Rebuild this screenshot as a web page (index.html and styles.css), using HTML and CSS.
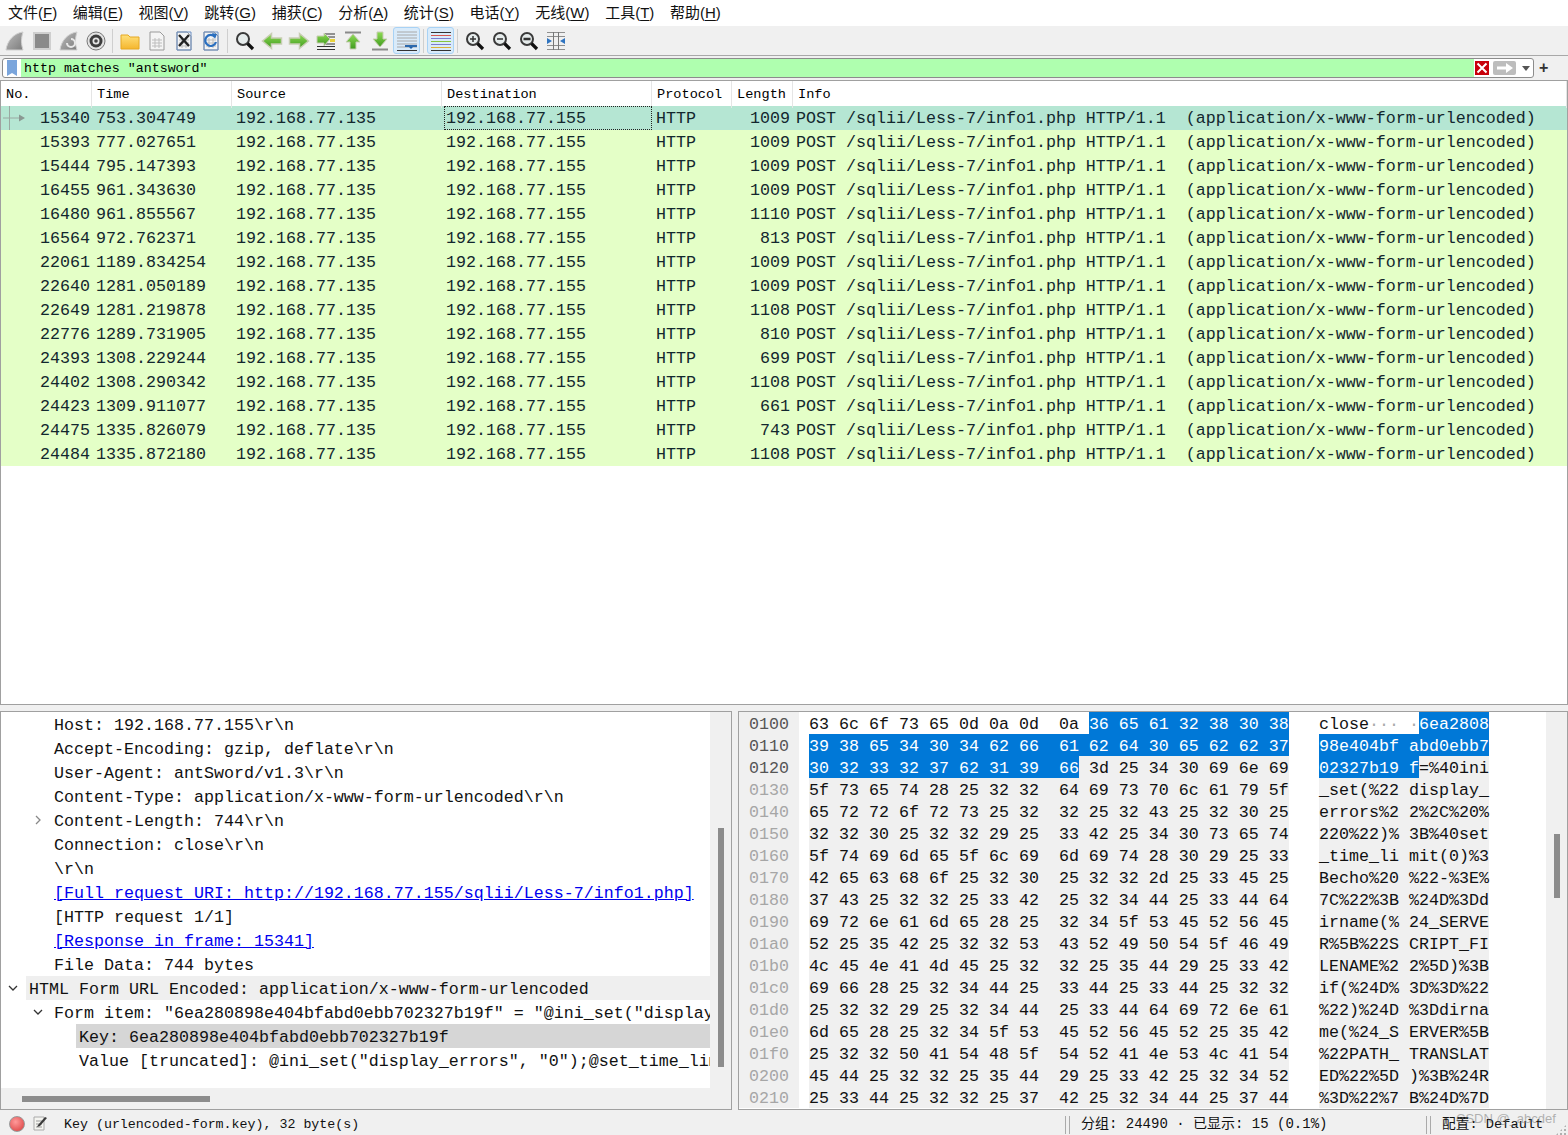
FILE: index.html
```html
<!DOCTYPE html>
<html lang="zh">
<head>
<meta charset="utf-8">
<title>Wireshark</title>
<link rel="stylesheet" href="styles.css">
</head>
<body>
<svg class="defs" width="0" height="0">
<defs>
<linearGradient id="g" x1="0" y1="0" x2="0" y2="1"><stop offset="0" stop-color="#8fdc55"/><stop offset="1" stop-color="#3f9a1e"/></linearGradient>
<linearGradient id="f" x1="0" y1="0" x2="0" y2="1"><stop offset="0" stop-color="#ffe07a"/><stop offset="1" stop-color="#f5b62e"/></linearGradient>
<linearGradient id="s" x1="0" y1="0" x2="1" y2="1"><stop offset="0" stop-color="#bdbdbd"/><stop offset="1" stop-color="#7c7c7c"/></linearGradient>
<symbol id="fin" viewBox="0 0 20 20"><path d="M1 19C2 10 9 2 18 1c-2 6-2 12 0 18z" fill="url(#s)" stroke="#cfcfcf"/></symbol>
<symbol id="mag" viewBox="0 0 20 20"><circle cx="8" cy="8" r="6" fill="#e6ecec" stroke="#3a3a3a" stroke-width="2"/><path d="M12.500 12.500l5.500 5.500" stroke="#111" stroke-width="3.200"/></symbol>
<symbol id="sheet" viewBox="0 0 20 20"><path d="M3 1h10l4 4v14H3z" fill="#f4f4f4" stroke="#9a9a9a"/><path d="M5 9h10M5 12h10M5 15h10M8 7v10M12 7v10" stroke="#bdbdbd"/></symbol>
<symbol id="left" viewBox="0 0 22 20"><path d="M1.500 10l9-7.500V7h10v6h-10v4.500z" fill="url(#g)" stroke="#c8cdb4" stroke-width="1.500"/></symbol>
<symbol id="right" viewBox="0 0 22 20"><path d="M20.500 10l-9-7.500V7h-10v6h10v4.500z" fill="url(#g)" stroke="#c8cdb4" stroke-width="1.500"/></symbol>
<symbol id="lines" viewBox="0 0 22 22"><path d="M1 2h20M1 5h20M1 8h20M1 11h20M1 14h20M1 17h20" stroke="#a8a8a8"/><path d="M1 20.500h20" stroke="#333"/></symbol>
</defs>
</svg>

<header class="menubar">
<span class="menu">文件(<u>F</u>)</span><span class="menu">编辑(<u>E</u>)</span><span class="menu">视图(<u>V</u>)</span><span class="menu">跳转(<u>G</u>)</span><span class="menu">捕获(<u>C</u>)</span><span class="menu">分析(<u>A</u>)</span><span class="menu">统计(<u>S</u>)</span><span class="menu">电话(<u>Y</u>)</span><span class="menu">无线(<u>W</u>)</span><span class="menu">工具(<u>T</u>)</span><span class="menu">帮助(<u>H</u>)</span>
</header>

<nav class="toolbar">
<span class="tool"><svg width="20" height="20"><use href="#fin"/></svg></span>
<span class="tool"><svg width="20" height="20" viewBox="0 0 20 20"><rect x="2" y="2" width="16" height="16" fill="#8a8a8a" stroke="#cfcfcf" stroke-width="2"/></svg></span>
<span class="tool"><svg width="20" height="20" viewBox="0 0 20 20"><use href="#fin" width="20" height="20"/><path d="M8 12a4 4 0 1 0 4-4" fill="none" stroke="#e8e8e8" stroke-width="2"/></svg></span>
<span class="tool"><svg width="20" height="20" viewBox="0 0 20 20"><circle cx="10" cy="10" r="9" fill="#e2e2e2" stroke="#777"/><circle cx="10" cy="10" r="6.500" fill="#3c3c3c"/><circle cx="10" cy="10" r="3.500" fill="#e4e4e4"/><circle cx="10" cy="10" r="1.800" fill="#444"/></svg></span>
<span class="tsep"></span>
<span class="tool"><svg width="20" height="20" viewBox="0 0 20 20"><path d="M1 4h7l2 2h9v12H1z" fill="url(#f)" stroke="#e6a823"/></svg></span>
<span class="tool"><svg width="20" height="20"><use href="#sheet"/></svg></span>
<span class="tool"><svg width="20" height="20" viewBox="0 0 20 20"><use href="#sheet" width="20" height="20"/><path d="M3 1h14v18H3z" fill="none" stroke="#6a8fc4"/><path d="M5 4l10 11M15 4L5 15" stroke="#222" stroke-width="2.400"/></svg></span>
<span class="tool"><svg width="20" height="20" viewBox="0 0 20 20"><use href="#sheet" width="20" height="20"/><path d="M3 1h14v18H3z" fill="none" stroke="#6a8fc4"/><path d="M14 6a5.500 5.500 0 1 0 1 5" fill="none" stroke="#2a6fc0" stroke-width="2.200"/><path d="M11 2l5 1-2 5z" fill="#2a6fc0"/></svg></span>
<span class="tsep"></span>
<span class="tool"><svg width="20" height="20"><use href="#mag"/></svg></span>
<span class="tool"><svg width="22" height="20"><use href="#left"/></svg></span>
<span class="tool"><svg width="22" height="20"><use href="#right"/></svg></span>
<span class="tool"><svg width="20" height="20" viewBox="0 0 20 20"><path d="M9 3h10M9 6h10M9 13h10M1 15.500h18M1 18.500h18" stroke="#333"/><path d="M14 9.500h5" stroke="#e8d23c" stroke-width="3"/><path d="M14 8l-6-6v3H1v7h7v3z" fill="url(#g)" stroke="#c8cdb4"/></svg></span>
<span class="tool"><svg width="20" height="20" viewBox="0 0 20 20"><path d="M2 1.500h16" stroke="#8a8a8a" stroke-width="2"/><path d="M10 3l7 8h-4v7H7v-7H3z" fill="url(#g)" stroke="#c8cdb4"/></svg></span>
<span class="tool"><svg width="20" height="20" viewBox="0 0 20 20"><path d="M2 18.500h16" stroke="#8a8a8a" stroke-width="2"/><path d="M10 16l7-8h-4V1H7v7H3z" fill="url(#g)" stroke="#c8cdb4"/></svg></span>
<span class="tool on"><svg width="22" height="22"><use href="#lines"/><path d="M11 15h8l-4 4z" fill="#1f5fa8"/><path d="M9 15h12v2H9z" fill="#2c69ad"/></svg></span>
<span class="tsep"></span>
<span class="tool on"><svg width="22" height="22" viewBox="0 0 22 22"><path d="M1 2.500h20" stroke="#333"/><path d="M1 5.500h20" stroke="#d6574f"/><path d="M1 8.500h20" stroke="#7c7ccf"/><path d="M1 11.500h20" stroke="#86c440"/><path d="M1 14.500h20" stroke="#7c7ccf"/><path d="M1 17.500h20" stroke="#d9b13a"/><path d="M1 20.500h20" stroke="#333"/></svg></span>
<span class="tsep"></span>
<span class="tool"><svg width="20" height="20"><use href="#mag"/><path d="M5 8h6M8 5v6" stroke="#333" stroke-width="1.500"/></svg></span>
<span class="tool"><svg width="20" height="20"><use href="#mag"/><path d="M5 8h6" stroke="#333" stroke-width="1.500"/></svg></span>
<span class="tool"><svg width="20" height="20"><use href="#mag"/><path d="M4.500 8h7" stroke="#333" stroke-width="2.500"/></svg></span>
<span class="tool"><svg width="20" height="20" viewBox="0 0 20 20"><path d="M1 1.500h18M1 5.500h18M1 14.500h18M1 18.500h18" stroke="#8f8f8f"/><path d="M7.500 1v18M12.500 1v18" stroke="#777"/><path d="M1 7l5 3-5 3zM19 7l-5 3 5 3z" fill="#2f74c0"/></svg></span>
</nav>

<section class="filterbar">
<div class="filter">
<span class="bookmark"><svg width="10" height="16" viewBox="0 0 10 16"><path d="M0 0h10v16l-5-3-5 3z" fill="#7aa5dc"/></svg></span>
<span class="filter-text">http matches "antsword"</span>
<span class="fclear"><svg width="14" height="14" viewBox="0 0 14 14"><rect width="14" height="14" fill="#c8000a"/><path d="M2.500 2.500l9 9M11.500 2.500l-9 9" stroke="#fff" stroke-width="2"/></svg></span>
<span class="fapply"><svg width="16" height="10" viewBox="0 0 16 10"><path d="M0 3.500h9V0l7 5-7 5V6.500H0z" fill="#fff"/></svg></span>
<span class="fdrop"></span>
</div>
<span class="fplus">+</span>
</section>

<main class="packets">
<div class="phead"><span>No.</span><span>Time</span><span>Source</span><span>Destination</span><span>Protocol</span><span>Length</span><span>Info</span></div>
<div class="prow sel"><span class="no"><svg class="mark" width="24" height="24" viewBox="0 0 24 24"><path d="M8.500 0v24M2 12h16" stroke="#9aa8a2"/><path d="M18 8.500l6 3.500-6 3.500z" fill="#8a9892"/></svg>15340</span><span>753.304749</span><span>192.168.77.135</span><span class="cur">192.168.77.155</span><span>HTTP</span><span class="len">1009</span><span class="info">POST /sqlii/Less-7/info1.php HTTP/1.1  (application/x-www-form-urlencoded)</span></div>
<div class="prow"><span class="no">15393</span><span>777.027651</span><span>192.168.77.135</span><span>192.168.77.155</span><span>HTTP</span><span class="len">1009</span><span class="info">POST /sqlii/Less-7/info1.php HTTP/1.1  (application/x-www-form-urlencoded)</span></div>
<div class="prow"><span class="no">15444</span><span>795.147393</span><span>192.168.77.135</span><span>192.168.77.155</span><span>HTTP</span><span class="len">1009</span><span class="info">POST /sqlii/Less-7/info1.php HTTP/1.1  (application/x-www-form-urlencoded)</span></div>
<div class="prow"><span class="no">16455</span><span>961.343630</span><span>192.168.77.135</span><span>192.168.77.155</span><span>HTTP</span><span class="len">1009</span><span class="info">POST /sqlii/Less-7/info1.php HTTP/1.1  (application/x-www-form-urlencoded)</span></div>
<div class="prow"><span class="no">16480</span><span>961.855567</span><span>192.168.77.135</span><span>192.168.77.155</span><span>HTTP</span><span class="len">1110</span><span class="info">POST /sqlii/Less-7/info1.php HTTP/1.1  (application/x-www-form-urlencoded)</span></div>
<div class="prow"><span class="no">16564</span><span>972.762371</span><span>192.168.77.135</span><span>192.168.77.155</span><span>HTTP</span><span class="len">813</span><span class="info">POST /sqlii/Less-7/info1.php HTTP/1.1  (application/x-www-form-urlencoded)</span></div>
<div class="prow"><span class="no">22061</span><span>1189.834254</span><span>192.168.77.135</span><span>192.168.77.155</span><span>HTTP</span><span class="len">1009</span><span class="info">POST /sqlii/Less-7/info1.php HTTP/1.1  (application/x-www-form-urlencoded)</span></div>
<div class="prow"><span class="no">22640</span><span>1281.050189</span><span>192.168.77.135</span><span>192.168.77.155</span><span>HTTP</span><span class="len">1009</span><span class="info">POST /sqlii/Less-7/info1.php HTTP/1.1  (application/x-www-form-urlencoded)</span></div>
<div class="prow"><span class="no">22649</span><span>1281.219878</span><span>192.168.77.135</span><span>192.168.77.155</span><span>HTTP</span><span class="len">1108</span><span class="info">POST /sqlii/Less-7/info1.php HTTP/1.1  (application/x-www-form-urlencoded)</span></div>
<div class="prow"><span class="no">22776</span><span>1289.731905</span><span>192.168.77.135</span><span>192.168.77.155</span><span>HTTP</span><span class="len">810</span><span class="info">POST /sqlii/Less-7/info1.php HTTP/1.1  (application/x-www-form-urlencoded)</span></div>
<div class="prow"><span class="no">24393</span><span>1308.229244</span><span>192.168.77.135</span><span>192.168.77.155</span><span>HTTP</span><span class="len">699</span><span class="info">POST /sqlii/Less-7/info1.php HTTP/1.1  (application/x-www-form-urlencoded)</span></div>
<div class="prow"><span class="no">24402</span><span>1308.290342</span><span>192.168.77.135</span><span>192.168.77.155</span><span>HTTP</span><span class="len">1108</span><span class="info">POST /sqlii/Less-7/info1.php HTTP/1.1  (application/x-www-form-urlencoded)</span></div>
<div class="prow"><span class="no">24423</span><span>1309.911077</span><span>192.168.77.135</span><span>192.168.77.155</span><span>HTTP</span><span class="len">661</span><span class="info">POST /sqlii/Less-7/info1.php HTTP/1.1  (application/x-www-form-urlencoded)</span></div>
<div class="prow"><span class="no">24475</span><span>1335.826079</span><span>192.168.77.135</span><span>192.168.77.155</span><span>HTTP</span><span class="len">743</span><span class="info">POST /sqlii/Less-7/info1.php HTTP/1.1  (application/x-www-form-urlencoded)</span></div>
<div class="prow"><span class="no">24484</span><span>1335.872180</span><span>192.168.77.135</span><span>192.168.77.155</span><span>HTTP</span><span class="len">1108</span><span class="info">POST /sqlii/Less-7/info1.php HTTP/1.1  (application/x-www-form-urlencoded)</span></div>
</main>

<section class="panes">
<div class="pane details">
<div class="tree">
<div class="line i2">Host: 192.168.77.155\r\n</div>
<div class="line i2">Accept-Encoding: gzip, deflate\r\n</div>
<div class="line i2">User-Agent: antSword/v1.3\r\n</div>
<div class="line i2">Content-Type: application/x-www-form-urlencoded\r\n</div>
<div class="line i2"><svg class="chev c2" width="10" height="10" viewBox="0 0 10 10"><path d="M3 1l4 4-4 4" fill="none" stroke="#888" stroke-width="1.300"/></svg>Content-Length: 744\r\n</div>
<div class="line i2">Connection: close\r\n</div>
<div class="line i2">\r\n</div>
<div class="line i2"><a class="lnk">[Full request URI: http://192.168.77.155/sqlii/Less-7/info1.php]</a></div>
<div class="line i2">[HTTP request 1/1]</div>
<div class="line i2"><a class="lnk">[Response in frame: 15341]</a></div>
<div class="line i2">File Data: 744 bytes</div>
<div class="line i1 band"><svg class="chev c1" width="10" height="10" viewBox="0 0 10 10"><path d="M1 3l4 4 4-4" fill="none" stroke="#333" stroke-width="1.300"/></svg>HTML Form URL Encoded: application/x-www-form-urlencoded</div>
<div class="line i2"><svg class="chev c2" width="10" height="10" viewBox="0 0 10 10"><path d="M1 3l4 4 4-4" fill="none" stroke="#333" stroke-width="1.300"/></svg>Form item: "6ea280898e404bfabd0ebb702327b19f" = "@ini_set("display_errors", "0");</div>
<div class="line i3 chosen">Key: 6ea280898e404bfabd0ebb702327b19f</div>
<div class="line i3">Value [truncated]: @ini_set("display_errors", "0");@set_time_limit(0);</div>
</div>
<span class="vthumb left-v"></span>
<span class="hthumb"></span>
</div>
<div class="pane bytes">
<div class="hexview">
<div class="hr main"><span class="off">0100</span><span class="hex">63 6c 6f 73 65 0d 0a 0d  0a <b>36 65 61 32 38 30 38</b></span><span class="asc">close<em>···</em> <em>·</em><b>6ea2808</b></span></div>
<div class="hr main"><span class="off">0110</span><span class="hex"><b>39 38 65 34 30 34 62 66  61 62 64 30 65 62 62 37</b></span><span class="asc"><b>98e404bf abd0ebb7</b></span></div>
<div class="hr main"><span class="off">0120</span><span class="hex"><b>30 32 33 32 37 62 31 39  66</b><i> 3d 25 34 30 69 6e 69</i></span><span class="asc"><b>02327b19 f</b><i>=%40ini</i></span></div>
<div class="hr"><span class="off">0130</span><span class="hex">5f 73 65 74 28 25 32 32  64 69 73 70 6c 61 79 5f</span><span class="asc">_set(%22 display_</span></div>
<div class="hr"><span class="off">0140</span><span class="hex">65 72 72 6f 72 73 25 32  32 25 32 43 25 32 30 25</span><span class="asc">errors%2 2%2C%20%</span></div>
<div class="hr"><span class="off">0150</span><span class="hex">32 32 30 25 32 32 29 25  33 42 25 34 30 73 65 74</span><span class="asc">220%22)% 3B%40set</span></div>
<div class="hr"><span class="off">0160</span><span class="hex">5f 74 69 6d 65 5f 6c 69  6d 69 74 28 30 29 25 33</span><span class="asc">_time_li mit(0)%3</span></div>
<div class="hr"><span class="off">0170</span><span class="hex">42 65 63 68 6f 25 32 30  25 32 32 2d 25 33 45 25</span><span class="asc">Becho%20 %22-%3E%</span></div>
<div class="hr"><span class="off">0180</span><span class="hex">37 43 25 32 32 25 33 42  25 32 34 44 25 33 44 64</span><span class="asc">7C%22%3B %24D%3Dd</span></div>
<div class="hr"><span class="off">0190</span><span class="hex">69 72 6e 61 6d 65 28 25  32 34 5f 53 45 52 56 45</span><span class="asc">irname(% 24_SERVE</span></div>
<div class="hr"><span class="off">01a0</span><span class="hex">52 25 35 42 25 32 32 53  43 52 49 50 54 5f 46 49</span><span class="asc">R%5B%22S CRIPT_FI</span></div>
<div class="hr"><span class="off">01b0</span><span class="hex">4c 45 4e 41 4d 45 25 32  32 25 35 44 29 25 33 42</span><span class="asc">LENAME%2 2%5D)%3B</span></div>
<div class="hr"><span class="off">01c0</span><span class="hex">69 66 28 25 32 34 44 25  33 44 25 33 44 25 32 32</span><span class="asc">if(%24D% 3D%3D%22</span></div>
<div class="hr"><span class="off">01d0</span><span class="hex">25 32 32 29 25 32 34 44  25 33 44 64 69 72 6e 61</span><span class="asc">%22)%24D %3Ddirna</span></div>
<div class="hr"><span class="off">01e0</span><span class="hex">6d 65 28 25 32 34 5f 53  45 52 56 45 52 25 35 42</span><span class="asc">me(%24_S ERVER%5B</span></div>
<div class="hr"><span class="off">01f0</span><span class="hex">25 32 32 50 41 54 48 5f  54 52 41 4e 53 4c 41 54</span><span class="asc">%22PATH_ TRANSLAT</span></div>
<div class="hr"><span class="off">0200</span><span class="hex">45 44 25 32 32 25 35 44  29 25 33 42 25 32 34 52</span><span class="asc">ED%22%5D )%3B%24R</span></div>
<div class="hr"><span class="off">0210</span><span class="hex">25 33 44 25 32 32 25 37  42 25 32 34 44 25 37 44</span><span class="asc">%3D%22%7 B%24D%7D</span></div>
</div>
<span class="vthumb right-v"></span>
</div>
</section>

<footer class="status">
<span class="led"></span>
<svg class="note" width="14" height="16" viewBox="0 0 14 16"><path d="M1 2h10v13H1z" fill="#f4f4f0" stroke="#aaa"/><path d="M3 6h6M3 9h6M3 12h6" stroke="#999"/><path d="M5 10l7-8 2 1-7 8-3 1z" fill="#3a3a3a"/></svg>
<span class="st-main">Key (urlencoded-form.key), 32 byte(s)</span>
<span class="st-sep"></span>
<span class="st-packets">分组: 24490 · 已显示: 15 (0.1%)</span>
<span class="st-sep"></span>
<span class="st-profile">配置: Default</span>
<span class="wm">CSDN @_abcdef</span>
<span class="grip"></span>
</footer>
</body>
</html>
```

FILE: styles.css
```css
* { box-sizing: border-box; }
html, body { margin: 0; height: 100%; }
body {
  width: 1568px;
  height: 1135px;
  overflow: hidden;
  background: #f0f0f0;
  display: flex;
  flex-direction: column;
  font-family: "Liberation Mono", "Noto Sans CJK SC", monospace;
  color: #000;
}
.defs { position: absolute; }

.menubar {
  height: 26px;
  flex: none;
  background: #fff;
  display: flex;
  gap: 15.700px;
  padding-left: 8px;
  align-items: center;
  font: 15px/26px "Liberation Sans", "Noto Sans CJK SC", sans-serif;
  color: #111;
}
.menu u { text-underline-offset: 2px; }

.toolbar {
  height: 30px;
  flex: none;
  display: flex;
  align-items: center;
  padding-left: 1px;
  border-bottom: 1px solid #a8a8a8;
}
.tool {
  width: 27px;
  height: 27px;
  flex: none;
  display: flex;
  align-items: center;
  justify-content: center;
  border: 1px solid transparent;
  border-radius: 3px;
}
.tool.on { background: #d9ebfa; border-color: #a8d2f5; }
.tsep {
  width: 7px;
  height: 24px;
  flex: none;
  background: linear-gradient(#cfcfcf, #cfcfcf) center / 1px 100% no-repeat;
}

.filterbar {
  height: 24px;
  flex: none;
  display: flex;
  align-items: center;
  padding: 2px 0 2px 2px;
}
.filter {
  width: 1532px;
  height: 20px;
  display: flex;
  align-items: center;
  background: #fff;
  border: 1px solid #8c8c8c;
  border-radius: 3px;
}
.bookmark {
  width: 18px;
  flex: none;
  display: flex;
  justify-content: center;
}
.filter-text {
  flex: none;
  width: 1453px;
  height: 18px;
  padding-left: 3px;
  background: #afffaf;
  font: 13.300px/20px "Liberation Mono", monospace;
  white-space: pre;
}
.fclear { margin-left: 1px; display: flex; }
.fapply {
  width: 23px;
  height: 14px;
  margin-left: 4px;
  background: #bdbdbd;
  border-radius: 2px;
  display: flex;
  align-items: center;
  justify-content: center;
}
.fdrop {
  width: 0;
  height: 0;
  margin-left: 6px;
  border: 4px solid transparent;
  border-top: 5px solid #555;
  border-bottom: 0;
}
.fplus {
  margin-left: 5px;
  font: bold 16px/20px "Liberation Sans", sans-serif;
  color: #333;
}

.packets {
  height: 625px;
  flex: none;
  background: #fff;
  border: 1px solid #a0a0a0;
  overflow: hidden;
}
.phead, .prow {
  display: grid;
  grid-template-columns: 91px 140px 210px 210px 80px 61px 1fr;
  white-space: pre;
}
.phead {
  height: 25px;
  font-size: 13.600px;
  line-height: 27px;
}
.phead span {
  padding-left: 5px;
  border-right: 1px solid #e5e5e5;
}
.prow {
  height: 24px;
  background: #e4ffc7;
  color: #12272e;
  font-size: 16.667px;
  line-height: 25px;
}
.prow span { height: 24px; }
.prow.sel { background: #b5e6d3; }
.prow span { padding-left: 4px; }
.prow .no { padding: 0 2px 0 0; text-align: right; position: relative; }
.prow .len { padding: 0 3px 0 0; text-align: right; }
.prow .info { padding-left: 3px; }
.mark { position: absolute; left: 0; top: 0; }
.prow .cur { padding-left: 2px; margin-left: 2px; outline: 1px dotted #222; outline-offset: -1px; }

.panes {
  height: 399px;
  flex: none;
  margin-top: 6px;
  display: flex;
  gap: 6px;
}
.pane {
  position: relative;
  height: 100%;
  border: 1px solid #a0a0a0;
  overflow: hidden;
  background: #f0f0f0;
}
.details { width: 732px; flex: none; }
.bytes { flex: 1; }

.tree {
  width: 709px;
  height: 376px;
  background: #fff;
  font-size: 16.667px;
  overflow: hidden;
}
.line { height: 24px; position: relative; color: #111; white-space: pre; overflow: hidden; line-height: 27px; }
.i1 { padding-left: 28px; }
.i2 { padding-left: 53px; }
.i3 { padding-left: 78px; }
.band { background: linear-gradient(#efefef, #efefef) 25px 0 no-repeat; }
.chosen { background: linear-gradient(#d6d6d6, #d6d6d6) 75px 0 no-repeat; }
.chev { position: absolute; top: 7px; }
.c1 { left: 7px; }
.c2 { left: 32px; }
.lnk { color: #0000ee; text-decoration: underline; }

.vthumb { position: absolute; width: 6px; background: #8c8c8c; }
.left-v { left: 717px; top: 116px; height: 239px; }
.right-v { left: 815px; top: 122px; height: 64px; }
.hthumb {
  position: absolute;
  left: 21px;
  top: 384px;
  width: 188px;
  height: 6px;
  background: #8c8c8c;
}

.hexview {
  width: 807px;
  height: 397px;
  background: #fff;
  font-size: 16.667px;
}
.hr { display: flex; height: 22px; color: #111; white-space: pre; line-height: 25px; }
.off {
  width: 60px;
  padding-left: 10px;
  background: #f0f0f0;
  color: #a6a6a6;
}
.main .off { color: #555; }
.hex {
  margin-left: 10px;
  width: 480px;
  background: #f0f0f0;
}
.asc {
  margin-left: 30px;
  width: 170px;
  background: #f0f0f0;
}
.main .hex, .main .asc { background: #fff; }
.hr b, .hr i { display: inline-block; height: 22px; font-weight: 400; font-style: normal; }
.hr b { color: #fff; background: #0078d7; }
.hr i { background: #f0f0f0; }
.hr em { font-style: normal; color: #aaa; }

.status {
  flex: 1;
  display: flex;
  align-items: center;
  position: relative;
  font: 13.300px/25px "Liberation Mono", "Noto Sans CJK SC", monospace;
  color: #111;
  padding: 2px 0 0 9px;
}
.led {
  width: 16px;
  height: 16px;
  margin-top: -2px;
  border-radius: 50%;
  background: radial-gradient(circle at 40% 35%, #ff9a9a, #d83a3a);
  border: 1px solid #999;
}
.note { margin: -4px 0 0 8px; }
.st-main { margin-left: 17px; width: 1001px; flex: none; white-space: pre; }
.st-sep {
  width: 5px;
  height: 18px;
  flex: none;
  border-left: 1px solid #aaa;
  border-right: 1px solid #aaa;
}
.st-packets { margin-left: 11px; width: 345px; flex: none; white-space: pre; font-size: 14px; }
.st-profile { margin-left: 11px; white-space: pre; font-size: 13.700px; }
.wm {
  position: absolute;
  left: 1456px;
  top: -1px;
  font: 13px/20px "Liberation Sans", sans-serif;
  color: rgba(110, 110, 110, .5);
}
.grip {
  position: absolute;
  right: 1px;
  bottom: 1px;
  width: 12px;
  height: 12px;
  background: radial-gradient(circle, #b0b0b0 1px, transparent 1.200px) 0 0 / 4px 4px;
  clip-path: polygon(100% 0, 100% 100%, 0 100%);
}
```
